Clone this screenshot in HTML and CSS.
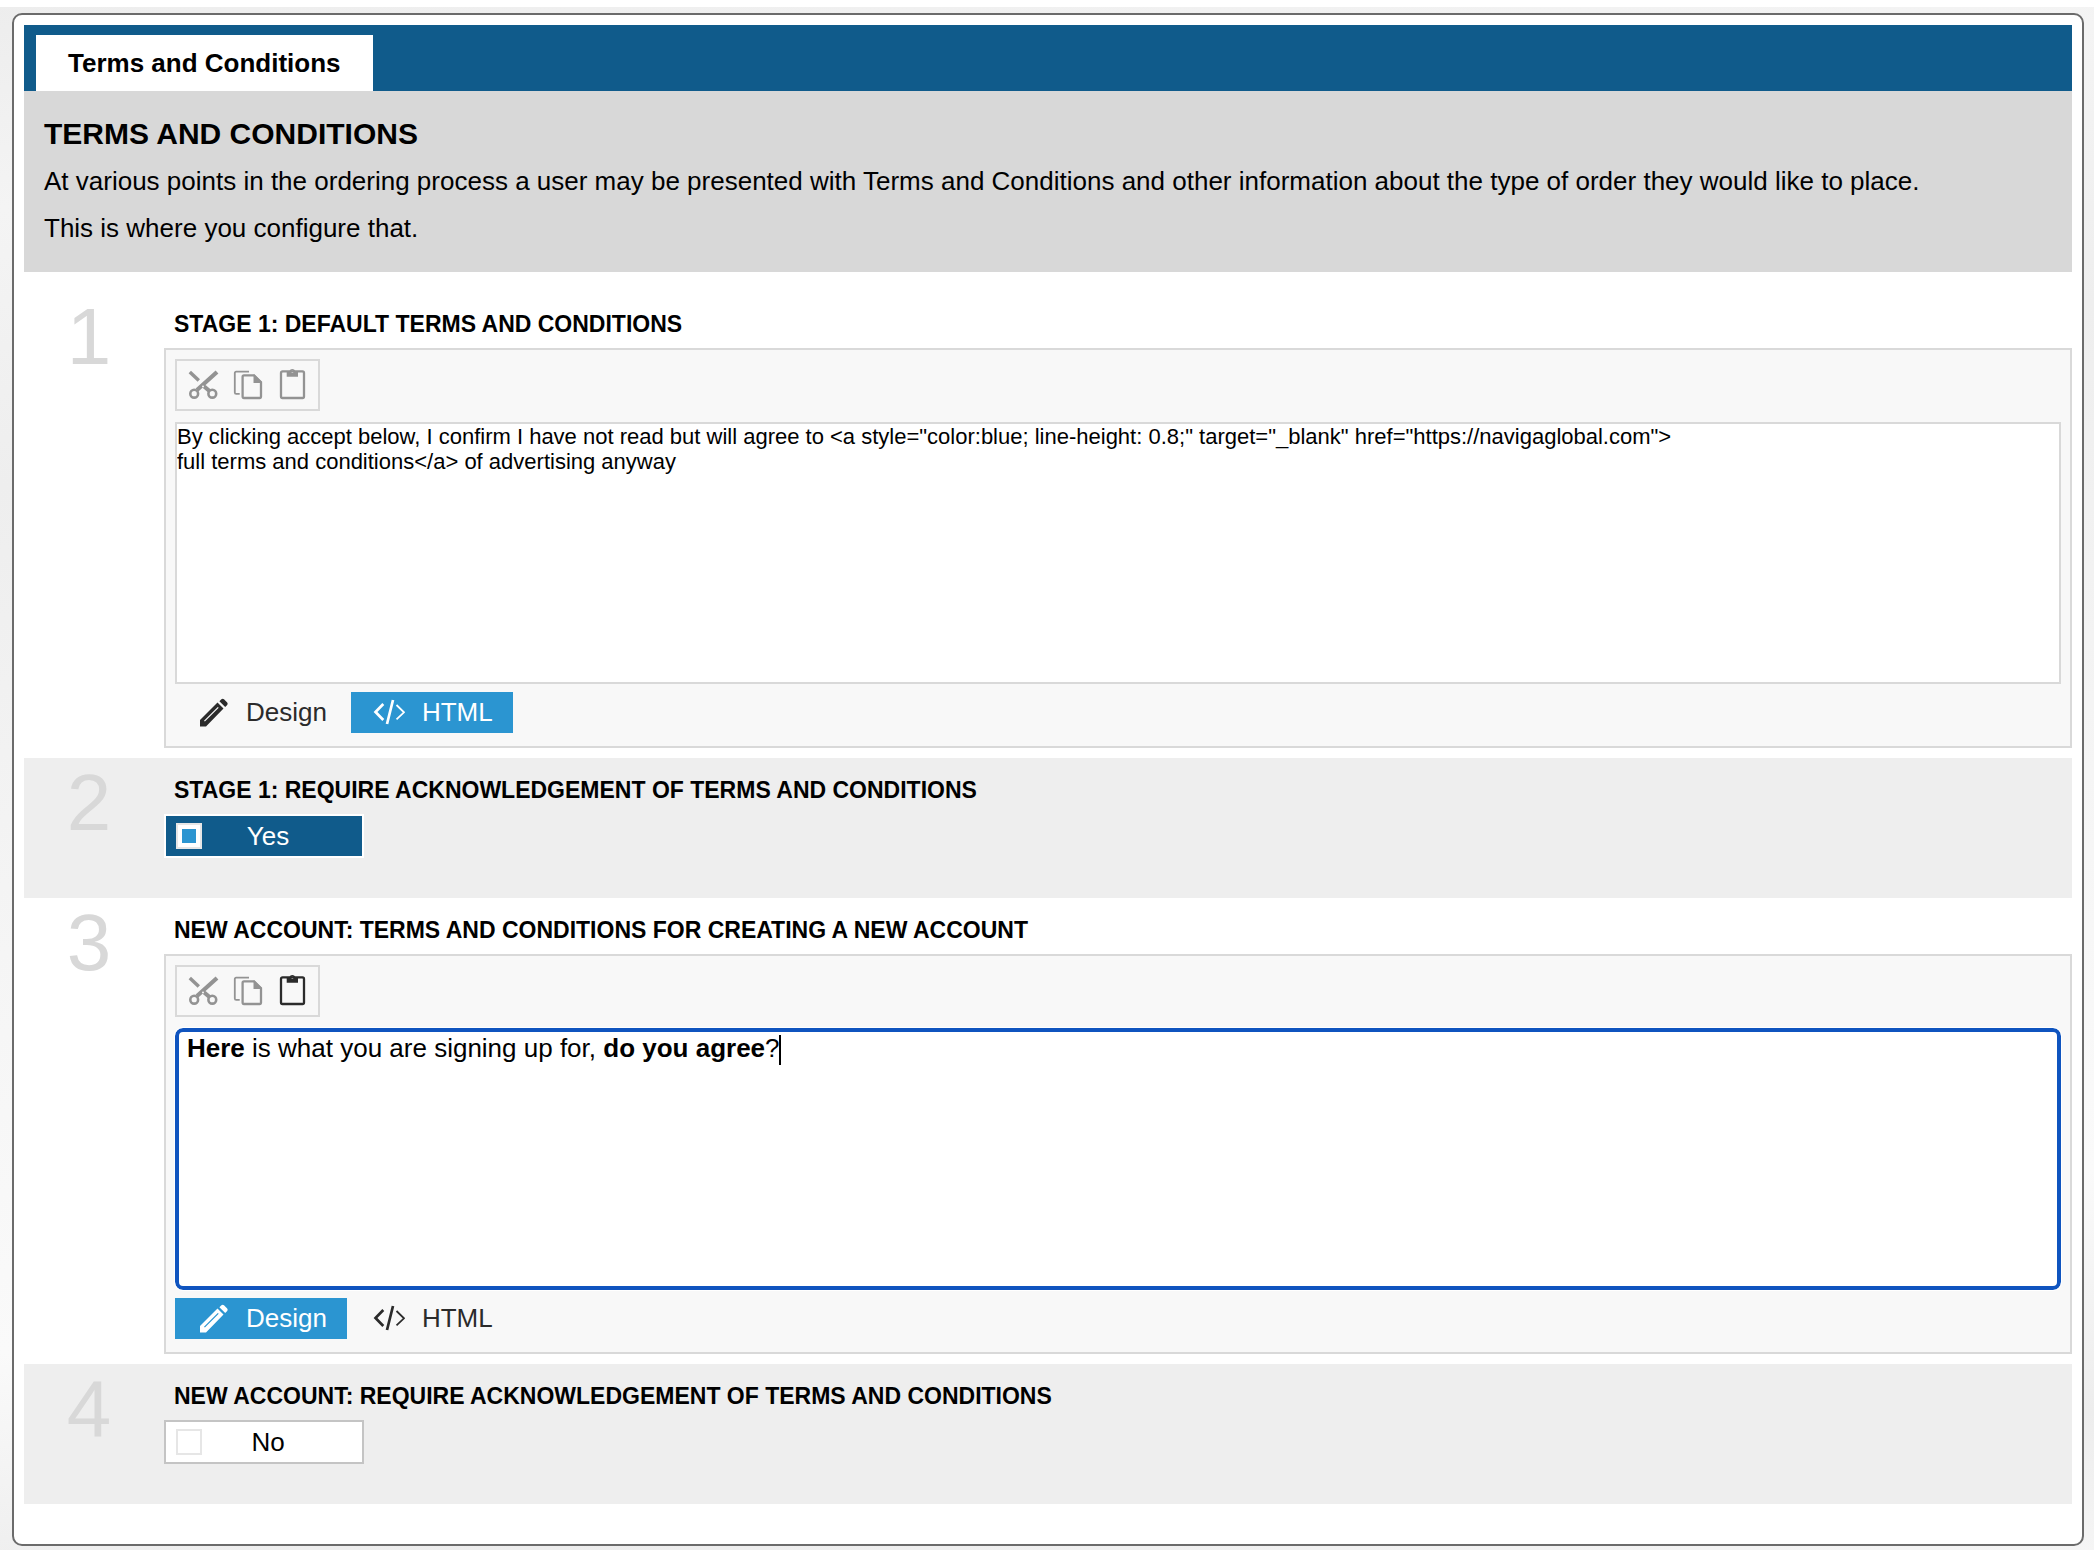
FILE: index.html
```html
<!DOCTYPE html>
<html lang="en">
<head>
<meta charset="utf-8">
<title>Terms and Conditions</title>
<link rel="stylesheet" href="styles.css">
</head>
<body>
<svg class="sprite" aria-hidden="true">
  <symbol id="cut" viewBox="0 0 32 32">
    <g fill="none" stroke="currentColor">
      <path d="M1.800 3l9 8.500" stroke-width="3.500"/>
      <path d="M29 3L9 21M15 16.500l6.500 5.500" stroke-width="4.200"/>
      <circle cx="6.200" cy="24.700" r="3.900" stroke-width="2.600"/>
      <circle cx="24.300" cy="24.700" r="3.900" stroke-width="2.600"/>
    </g>
    <circle cx="15" cy="17.500" r="1" fill="#f8f8f8"/>
  </symbol>
  <symbol id="copy" viewBox="0 0 32 32">
    <path d="M17 2.700H4.200q-1.400 0-1.400 1.400v19.300q0 1.400 1.400 1.400H7.700" fill="none" stroke="currentColor" stroke-width="1.800"/>
    <path d="M12 6.300h10l7 7V27.600q0 1.400-1.400 1.400H12q-1.400 0-1.400-1.400V7.700q0-1.400 1.400-1.400z" fill="none" stroke="currentColor" stroke-width="2.300"/>
    <path d="M21.500 5.500h1l7.500 7.500v1h-8.500z" fill="currentColor"/>
  </symbol>
  <symbol id="paste" viewBox="0 0 32 32">
    <rect x="5" y="2.400" width="23" height="26.600" rx="1.500" fill="none" stroke="currentColor" stroke-width="2.300"/>
    <path fill-rule="evenodd" d="M10.700 2H13.500Q14 0 16.300 0T19.200 2H22V7.700H10.700zM16.300 1.500a1.200 1.200 0 1 0 .1 0z" fill="currentColor"/>
  </symbol>
  <symbol id="pencil" viewBox="0 0 32 32">
    <path fill-rule="evenodd" d="M3 29.500v-6.500L20.500 5.500l6 6L9 29.500zM7 23.700l.9.900L21.700 10.800l-.9-.9zM22.400 4.300l2-2q1.300-1 2.600 0l3.200 3.200q1 1.300 0 2.600l-2 2z" fill="currentColor"/>
  </symbol>
  <symbol id="code" viewBox="0 0 32 32">
    <g fill="none" stroke="currentColor">
      <path d="M10.300 7L2.500 15l7.800 8M20 3l-6 24" stroke-width="2.700"/>
      <path d="M23.500 8l7.500 7.300-7.500 7" stroke-width="1.800"/>
    </g>
  </symbol>
</svg>

<main class="panel">
  <nav class="tabs"><a class="tab" href="#terms">Terms and Conditions</a></nav>

  <header class="intro" id="terms">
    <h1>TERMS AND CONDITIONS</h1>
    <p>At various points in the ordering process a user may be presented with Terms and Conditions and other information about the type of order they would like to place.</p>
    <p>This is where you configure that.</p>
  </header>

  <div class="rows">
    <section class="row">
      <div class="number">1</div>
      <div class="content">
        <h2><label for="default-terms">STAGE 1: DEFAULT TERMS AND CONDITIONS</label></h2>
        <div class="editor">
          <div class="toolbar">
            <button type="button" class="tool" aria-label="Cut" disabled><svg><use href="#cut"/></svg></button>
            <button type="button" class="tool" aria-label="Copy" disabled><svg><use href="#copy"/></svg></button>
            <button type="button" class="tool" aria-label="Paste" disabled><svg><use href="#paste"/></svg></button>
          </div>
          <textarea class="source" id="default-terms" spellcheck="false">By clicking accept below, I confirm I have not read but will agree to &lt;a style="color:blue; line-height: 0.8;" target="_blank" href="https://navigaglobal.com"&gt;
full terms and conditions&lt;/a&gt; of advertising anyway</textarea>
          <div class="modes">
            <button type="button" class="mode"><svg><use href="#pencil"/></svg>Design</button>
            <button type="button" class="mode active"><svg><use href="#code"/></svg>HTML</button>
          </div>
        </div>
      </div>
    </section>

    <section class="row shaded">
      <div class="number">2</div>
      <div class="content">
        <h2>STAGE 1: REQUIRE ACKNOWLEDGEMENT OF TERMS AND CONDITIONS</h2>
        <label class="toggle on"><input type="checkbox" checked><span>Yes</span></label>
      </div>
    </section>

    <section class="row">
      <div class="number">3</div>
      <div class="content">
        <h2 id="account-terms">NEW ACCOUNT: TERMS AND CONDITIONS FOR CREATING A NEW ACCOUNT</h2>
        <div class="editor">
          <div class="toolbar">
            <button type="button" class="tool" aria-label="Cut" disabled><svg><use href="#cut"/></svg></button>
            <button type="button" class="tool" aria-label="Copy" disabled><svg><use href="#copy"/></svg></button>
            <button type="button" class="tool" aria-label="Paste"><svg><use href="#paste"/></svg></button>
          </div>
          <div class="design" contenteditable="true" role="textbox" aria-multiline="true" aria-labelledby="account-terms" spellcheck="false"><b>Here</b> is what you are signing up for, <b>do you agree</b>?<span class="caret"></span></div>
          <div class="modes">
            <button type="button" class="mode active"><svg><use href="#pencil"/></svg>Design</button>
            <button type="button" class="mode"><svg><use href="#code"/></svg>HTML</button>
          </div>
        </div>
      </div>
    </section>

    <section class="row shaded">
      <div class="number">4</div>
      <div class="content">
        <h2>NEW ACCOUNT: REQUIRE ACKNOWLEDGEMENT OF TERMS AND CONDITIONS</h2>
        <label class="toggle"><input type="checkbox"><span>No</span></label>
      </div>
    </section>
  </div>
</main>
</body>
</html>
```

FILE: styles.css
```css
* { box-sizing: border-box; }

html {
  background: linear-gradient(175deg, #ededed 0%, #f4f4f4 12%, #eeeeee 28%, #f5f5f5 55%, #fafafa 78%, #ededed 92%, #f5f5f5 100%);
}

body {
  margin: 0;
  padding: 6px 10px 4px 12px;
  border-top: 7px solid #fff;
  font-family: "Liberation Sans", Arial, Helvetica, sans-serif;
  font-size: 26px;
  color: #000;
}

button, textarea { font-family: inherit; }

.sprite { display: none; }

.panel {
  padding: 10px 10px 40px;
  border: 2px solid #6b6b6b;
  border-radius: 10px;
  background: #fff;
}

.tabs {
  display: flex;
  padding: 10px 12px 0;
  background: #105b8b;
}

.tab {
  padding: 0 32px;
  background: #fff;
  color: #000;
  font-weight: bold;
  line-height: 56px;
  text-decoration: none;
}

.intro {
  padding: 23px 20px 20px;
  background: #d8d8d8;
}

.intro h1 {
  margin: 0 0 4px;
  font-size: 30px;
  line-height: 40px;
}

.intro p {
  margin: 0;
  line-height: 47px;
}

.rows { padding-top: 20px; }

.row {
  display: flex;
  padding-bottom: 10px;
}

.shaded {
  padding-bottom: 40px;
  background: #eee;
}

.number {
  width: 130px;
  margin-right: 10px;
  color: #d8d8d8;
  font-size: 80px;
  line-height: 90px;
  text-align: center;
}

.content {
  flex: 1;
  min-width: 0;
}

.content h2 {
  margin: 0 0 8px;
  padding: 16px 10px 0;
  font-size: 23px;
  line-height: 32px;
}

.editor {
  padding: 9px 9px 13px;
  border: 2px solid #d9d9d9;
  background: #f8f8f8;
}

.toolbar {
  display: flex;
  gap: 12px;
  width: fit-content;
  padding: 8px 10px 8px 11px;
  border: 2px solid #d9d9d9;
}

.tool {
  width: 32px;
  height: 32px;
  padding: 0;
  border: 0;
  background: none;
  color: #2b2b2b;
}

.tool:disabled { color: #939393; }

.tool svg, .mode svg {
  display: block;
  width: 32px;
  height: 32px;
}

.source, .design {
  display: block;
  width: 100%;
  height: 262px;
  margin: 11px 0 8px;
  background: #fff;
  color: #000;
}

.source {
  padding: 0;
  border: 2px solid #d9d9d9;
  font-size: 22px;
  line-height: 25px;
  resize: none;
}

.design {
  padding: 0 8px;
  border: 4px solid #0f54bf;
  border-radius: 8px;
  outline: 1px solid #fff;
  line-height: 32px;
}

.caret {
  display: inline-block;
  width: 2px;
  height: 30px;
  margin-left: -1px;
  background: #000;
  vertical-align: middle;
}

.modes {
  display: flex;
  gap: 4px;
}

.mode {
  display: flex;
  align-items: center;
  gap: 17px;
  height: 41px;
  padding: 0 20px 0 22px;
  border: 0;
  background: none;
  color: #2b2b2b;
  font-size: 26px;
}

.mode.active {
  background: #2b95d1;
  color: #fff;
}

.toggle {
  display: flex;
  align-items: center;
  width: 200px;
  height: 44px;
  padding: 0 10px;
  border: 2px solid #c4c4c4;
  background: #fff;
}

.toggle span {
  flex: 1;
  padding-right: 18px;
  text-align: center;
}

.toggle.on {
  border-color: #fff;
  background: #105b8b;
  color: #fff;
}

.toggle input {
  appearance: none;
  width: 26px;
  height: 26px;
  margin: 0;
  border: 2px solid #e6e6e6;
  background: #fff;
}

.toggle input:checked {
  padding: 4px;
  background: #2b95d1 content-box;
  box-shadow: inset 0 0 0 4px #fff;
}
```
